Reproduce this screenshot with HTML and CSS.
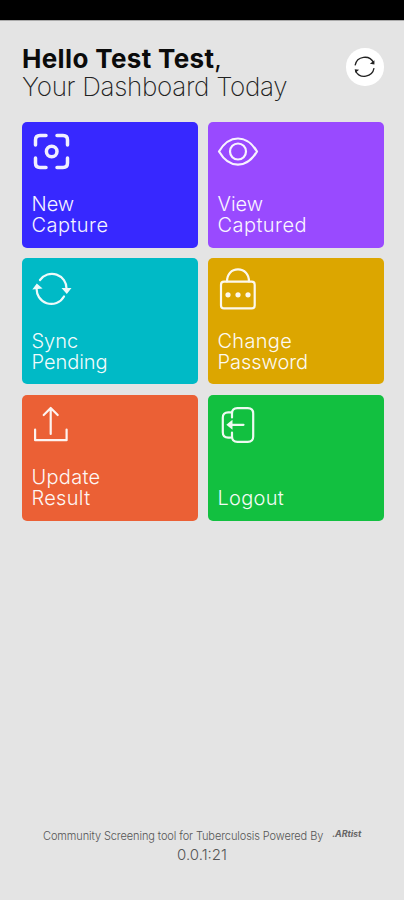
FILE: index.html
```html
<!DOCTYPE html>
<html lang="en">
<head>
<meta charset="utf-8">
<meta name="viewport" content="width=device-width, initial-scale=1">
<title>Dashboard</title>
<link rel="stylesheet" href="styles.css">
</head>
<body>
<div class="status-bar"></div>
<header class="header">
  <div class="greeting">
    <h1>Hello Test Test<span class="comma">,</span></h1>
    <p>Your Dashboard Today</p>
  </div>
  <button class="refresh" aria-label="Refresh">
    <svg viewBox="0 0 38 38"><path d="M9.2 17.5A10 10 0 0 1 28 15M28.4 20.5A10 10 0 0 1 9.8 23.5" /><path class="fill" d="M28.8 12.5v4.2l-4.6-.8zM8.8 21.5l4.5.5-3.8 3z"/></svg>
  </button>
</header>
<main class="grid">
  <a class="card blue">
    <svg viewBox="0 0 44 44"><g class="bold"><path d="M5.5 15V10q0-4.500 4.500-4.500h6M27 5.500h6q4.500 0 4.500 4.500v5M37.500 28v5q0 4.500-4.500 4.500h-6M16 37.500h-6q-4.500 0-4.500-4.500v-5"/><circle cx="21.700" cy="21.500" r="5.300"/></g></svg>
    <span class="label"><span>New</span><span class="wide">Capture</span></span>
  </a>
  <a class="card purple">
    <svg viewBox="0 0 44 44"><path d="M3 21.500C8 13 14 8.500 22 8.500S36 13 41 21.500C36 30 30 34.700 22 34.700S8 30 3 21.500Z"/><circle cx="22" cy="21.500" r="8"/></svg>
    <span class="label"><span>View</span><span class="wide">Captured</span></span>
  </a>
  <a class="card teal">
    <svg viewBox="0 0 44 44"><path d="M10 13A14.600 14.600 0 0 1 36.500 22M34 29.500A14.600 14.600 0 0 1 6.800 20.500"/><path class="fill" d="M31.500 21h10l-4.700 6zM2.300 22.500l4.500-6 5.800 5z"/></svg>
    <span class="label"><span>Sync</span><span>Pending</span></span>
  </a>
  <a class="card gold">
    <svg viewBox="0 0 44 44"><rect x="5" y="14.700" width="33.700" height="26.700" rx="3"/><path d="M11 14.500C11 7 15.500 2.400 22 2.400S33 7 33 14.500"/><g class="fill"><circle cx="12" cy="27.800" r="2.600"/><circle cx="22" cy="27.800" r="2.600"/><circle cx="32" cy="27.800" r="2.600"/></g></svg>
    <span class="label"><span class="mid">Change</span><span>Password</span></span>
  </a>
  <a class="card orange">
    <svg viewBox="0 0 44 44"><path d="M5.100 26.500v10.700h31.500V26.500M20.700 31V5.300M13.700 12l7-7 7 7"/></svg>
    <span class="label"><span class="mid">Update</span><span class="mid">Result</span></span>
  </a>
  <a class="card green">
    <svg viewBox="0 0 44 44"><path d="M16 14.500V10.500q0-5.400 5.400-5.400h10.400q5.400 0 5.400 5.400v23q0 5.400-5.400 5.400h-10.400q-5.400 0-5.400-5.400v-4M14.500 9.400h-2.300q-5.400 0-5.400 5.400v14.400q0 5.400 5.400 5.400h2.300M27.500 21.800H14"/><path class="fill" d="M16.500 16.800v10L10.300 21.800z"/></svg>
    <span class="label"><span class="mid">Logout</span></span>
  </a>
</main>
<footer class="footer">
  <div class="credit"><span class="credit-text">Community Screening tool for Tuberculosis Powered By</span><span class="brand">.ARtist</span></div>
  <div class="version">0.0.1:21</div>
</footer>
</body>
</html>
```
FILE: styles.css
```css
* { box-sizing: border-box; }
body {
  margin: 0;
  height: 900px;
  display: flex;
  flex-direction: column;
  background: #e4e4e4;
  color: #000;
  font-family: Inter, "Liberation Sans", sans-serif;
  overflow: hidden;
}
.status-bar { height: 20px; flex: none; background: #000; box-shadow: 0 1px 0 #aaa; }
.header {
  display: flex;
  justify-content: space-between;
  align-items: flex-start;
  height: 101.500px;
  padding: 25px 20.500px 0 22px;
}
.greeting h1, .greeting p { margin: 0; line-height: 28px; white-space: nowrap; }
.greeting h1 { font-size: 26px; font-weight: 700; letter-spacing: .35px; color: #0b0b0b; }
.greeting p { font-size: 26px; font-weight: 200; letter-spacing: -.3px; color: #222; }
.comma { font-weight: 400; }
.refresh {
  width: 37.500px;
  height: 37.500px;
  margin-top: 3px;
  padding: 0;
  border: 0;
  border-radius: 50%;
  background: #fff;
}
.refresh svg { display: block; width: 37.500px; height: 37.500px; fill: none; stroke: #222; stroke-width: 1.300; }
.refresh .fill { fill: #222; stroke: none; }
.grid {
  display: grid;
  grid-template-columns: 175.500px 175.500px;
  grid-auto-rows: 126px;
  gap: 10.500px;
  padding-left: 22px;
}
.card {
  display: flex;
  flex-direction: column;
  justify-content: space-between;
  align-items: flex-start;
  padding: 8.500px 9.500px 11.500px 8px;
  border-radius: 5px;
  color: #fff;
}
.card svg { width: 44px; height: 44px; fill: none; stroke: currentColor; stroke-width: 2.200; stroke-linecap: round; stroke-linejoin: round; opacity: .93; }
.card svg .bold { stroke-width: 3.500; }
.card svg .fill { fill: currentColor; stroke: none; }
.label { padding-left: 1.500px; font-size: 20px; line-height: 21px; font-weight: 350; opacity: .95; }
.label span { display: block; letter-spacing: -.05px; }
.label .wide { letter-spacing: .45px; }
.label .mid { letter-spacing: .3px; }
.blue { background: #3728ff; }
.purple { background: #994aff; }
.teal { background: #00bac6; }
.gold { background: #dca600; }
.orange { background: #eb6035; }
.green { background: #12c040; }
.footer { margin-top: auto; height: 72px; color: #555; }
.credit { display: flex; align-items: center; height: 15px; padding-left: 43px; font-size: 11px; font-weight: 300; white-space: nowrap; }
.credit-text { letter-spacing: -.1px; }
.brand { margin-left: 9px; margin-top: -4px; font-size: 9px; font-weight: 700; font-style: italic; letter-spacing: -.1px; color: #666; }
.version { margin-top: 3px; text-align: center; font-size: 15px; line-height: 18px; font-weight: 300; }
```
